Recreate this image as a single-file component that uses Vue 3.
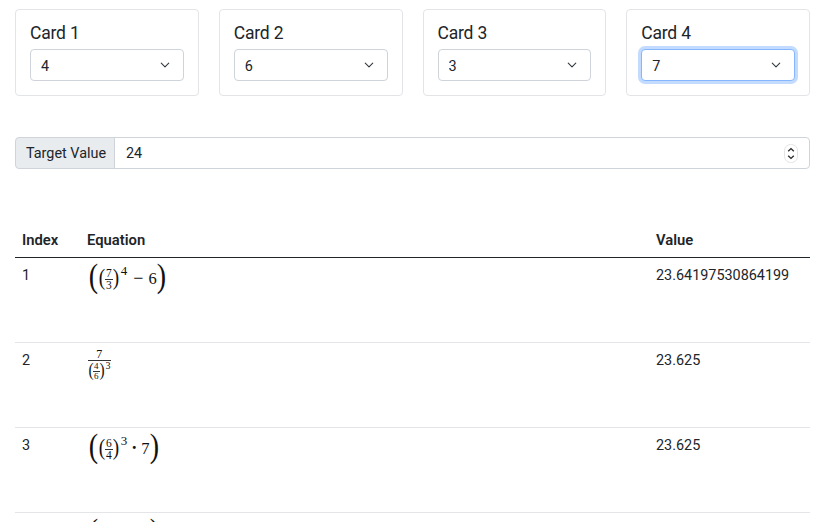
<script setup>
import { ref } from "vue";

const options = [1, 2, 3, 4, 5, 6, 7, 8, 9]
const cards = ref([
  { name: 'Card 1', value: 4, focused: false },
  { name: 'Card 2', value: 6, focused: false },
  { name: 'Card 3', value: 3, focused: false },
  { name: 'Card 4', value: 7, focused: true },
])
const target = ref(24)
const results = [
  { index: 1, value: '23.64197530864199' },
  { index: 2, value: '23.625' },
  { index: 3, value: '23.625' },
  { index: 4, value: '23.625' },
]
</script>

<template>
  <div class="page">
    <div class="cards">
      <div v-for="card of cards" :key="card.name" class="card">
        <h5 class="card__title">{{ card.name }}</h5>
        <select v-model="card.value" class="select" :class="{ _focus: card.focused }">
          <option v-for="o of options" :key="o" :value="o">{{ o }}</option>
        </select>
      </div>
    </div>

    <div class="target">
      <span class="target__label">Target Value</span>
      <div class="target__field">
        <input v-model="target" class="target__input" type="text" />
        <svg class="spin" width="14" height="19" viewBox="0 0 14 19">
          <rect x="0.5" y="0.5" width="13" height="18" rx="6" fill="#fff" stroke="#e3e3e3" />
          <path d="M4.2 7.2 7 4.6l2.8 2.6M4.2 11.8 7 14.4l2.8-2.6" fill="none" stroke="#2b2b2b" stroke-width="1.4" />
        </svg>
      </div>
    </div>

    <table class="results">
      <thead>
        <tr>
          <th class="col-index">Index</th>
          <th class="col-eq">Equation</th>
          <th>Value</th>
        </tr>
      </thead>
      <tbody>
        <tr v-for="row of results" :key="row.index">
          <td>{{ row.index }}</td>
          <td>
            <span v-if="row.index === 1" class="math">
              <span class="paren _big">(</span>
              <span class="paren _mid">(</span>
              <span class="frac"><span>7</span><span>3</span></span>
              <span class="paren _mid">)</span>
              <sup class="pow">4</sup>
              <span class="op">−</span>
              <span class="num">6</span>
              <span class="paren _big">)</span>
            </span>
            <span v-else-if="row.index === 2" class="math _fraction">
              <span class="frac _outer">
                <span class="num _small">7</span>
                <span class="denom">
                  <span class="paren _small">(</span>
                  <span class="frac _tiny"><span>4</span><span>6</span></span>
                  <span class="paren _small">)</span>
                  <sup class="pow _small">3</sup>
                </span>
              </span>
            </span>
            <span v-else class="math">
              <span class="paren _big">(</span>
              <span class="paren _mid">(</span>
              <span class="frac"><span>6</span><span>4</span></span>
              <span class="paren _mid">)</span>
              <sup class="pow">3</sup>
              <span class="op _dot">·</span>
              <span class="num">7</span>
              <span class="paren _big">)</span>
            </span>
          </td>
          <td>{{ row.value }}</td>
        </tr>
      </tbody>
    </table>
  </div>
</template>

<style>
html, body {
  overflow: hidden;
}
</style>

<style scoped>
.page {
  padding: 9px 13px 0 15px;
  font-family: Roboto, "Liberation Sans", sans-serif;
  font-size: 14.4px;
  color: #212529;
}
.cards {
  display: grid;
  grid-template-columns: repeat(4, 1fr);
  gap: 20px;
}
.card {
  height: 87px;
  box-sizing: border-box;
  padding: 13px 14px;
  border: 1px solid #e2e4e7;
  border-radius: 4px;
}
.card__title {
  margin: 0 0 5px;
  font-size: 17.5px;
  font-weight: 400;
  letter-spacing: -0.2px;
  line-height: 21px;
}
.select {
  display: block;
  width: 100%;
  height: 32px;
  box-sizing: border-box;
  padding: 2px 10px 0;
  border: 1px solid #ced4da;
  border-radius: 4px;
  background: #fff url("data:image/svg+xml,%3csvg xmlns='http://www.w3.org/2000/svg' viewBox='0 0 16 16'%3e%3cpath fill='none' stroke='%23343a40' stroke-linecap='round' stroke-linejoin='round' stroke-width='1.8' d='m2 5 6 6 6-6'/%3e%3c/svg%3e") no-repeat right 12px center / 12px 10px;
  font: inherit;
  color: #212529;
  appearance: none;
  outline: none;
}
.select._focus {
  border-color: #86b7fe;
  box-shadow: 0 0 0 3px rgba(13, 110, 253, 0.25);
}
.target {
  display: flex;
  height: 32px;
  margin-top: 41px;
}
.target__label {
  display: flex;
  align-items: center;
  box-sizing: border-box;
  width: 100px;
  padding: 1px 10px 0;
  border: 1px solid #ced4da;
  border-radius: 4px 0 0 4px;
  background: #e9ecef;
  white-space: nowrap;
}
.target__field {
  flex: 1;
  display: flex;
  align-items: center;
  margin-left: -1px;
  padding: 0 11px;
  border: 1px solid #ced4da;
  border-radius: 0 4px 4px 0;
}
.target__input {
  flex: 1;
  min-width: 0;
  padding: 1px 0 0;
  border: none;
  font: inherit;
  color: #212529;
  outline: none;
}
.spin {
  flex: none;
}
.results {
  width: 100%;
  margin-top: 57px;
  border-collapse: collapse;
  table-layout: fixed;
}
.results th {
  height: 31px;
  padding: 0 7px 2px;
  box-sizing: border-box;
  border-bottom: 1px solid #212529;
  font-size: 14.8px;
  font-weight: 600;
  text-align: left;
}
.results td {
  height: 85px;
  padding: 9px 7px 0;
  box-sizing: border-box;
  border-bottom: 1px solid #e3e5e8;
  vertical-align: top;
}
.col-index {
  width: 65px;
}
.col-eq {
  width: 569px;
}
.math {
  display: inline-flex;
  align-items: center;
  vertical-align: top;
  height: 30px;
  margin: -3px 0 0 2px;
  font-family: "Liberation Serif", serif;
  color: #111;
}
.math._fraction {
  align-items: flex-start;
  height: auto;
  margin-top: -2px;
  margin-left: 1px;
}
.paren {
  font-weight: 400;
  line-height: 1;
}
.paren._big {
  display: inline-block;
  margin: -5px -1px 0;
  font-size: 33px;
  transform: scaleX(0.85);
}
.paren._mid {
  margin: -3px -0.5px 0;
  font-size: 24px;
  transform: scaleX(0.8);
}
.paren._small {
  font-size: 18px;
  margin: -2px -0.5px 0;
  transform: scaleX(0.85);
}
.frac {
  display: inline-flex;
  flex-direction: column;
  align-items: center;
  font-size: 11.5px;
  line-height: 10px;
}
.frac > span:first-child {
  padding: 0 1px 1px;
  border-bottom: 1px solid #333;
}
.frac._outer {
  font-size: 16px;
}
.frac._outer > span:first-child {
  align-self: stretch;
  text-align: center;
}
.frac._tiny {
  font-size: 9px;
  line-height: 8px;
}
.num {
  font-size: 16.5px;
}
.num._small {
  font-size: 12px;
  line-height: 9px;
}
.denom {
  display: inline-flex;
  align-items: center;
  height: 20px;
}
.pow {
  align-self: flex-start;
  margin: 0 0 0 1px;
  font-size: 13px;
  line-height: 14px;
}
.pow._small {
  margin: 0 0 0 1px;
  font-size: 10px;
  line-height: 10px;
}
.op {
  margin: 0 5px 0 6px;
  font-size: 18px;
}
.op._dot {
  margin: 0 4px;
  font-weight: 700;
}
</style>
